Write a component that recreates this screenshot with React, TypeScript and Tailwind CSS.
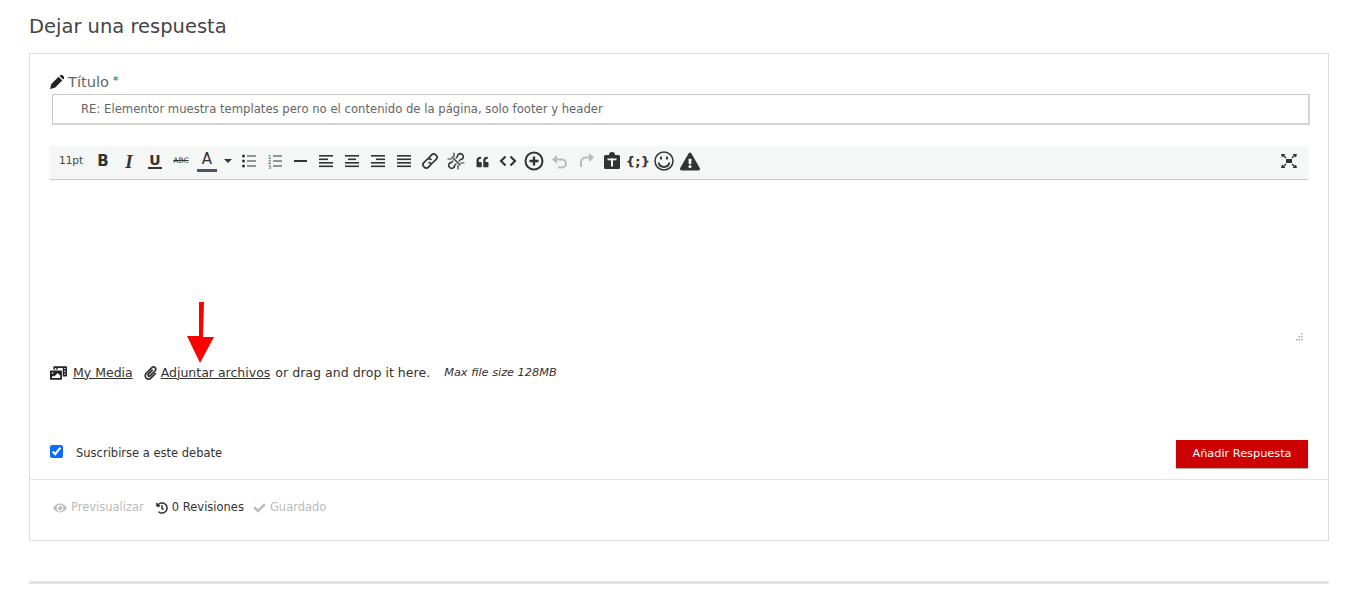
import { ReactNode } from 'react';
import {
  FaCheck,
  FaEye,
  FaHistory,
  FaPaperclip,
  FaPhotoVideo,
  FaQuoteLeft,
  FaExclamationTriangle,
} from 'react-icons/fa';

function Lines({ rows }: { rows: [number, number][] }) {
  return (
    <svg width="16" height="16" viewBox="0 0 16 16" fill="#333">
      {rows.map(([x, w], i) => (
        <rect key={i} x={x} y={2 + i * 3.5} width={w} height="1.6" />
      ))}
    </svg>
  );
}

function ToolButton({ children, className = 'w-[26px]' }: { children: ReactNode; className?: string }) {
  return <div className={`flex h-full shrink-0 items-center justify-center text-[#333] ${className}`}>{children}</div>;
}

export default function App() {
  return (
    <div className="relative h-[592px] w-[1351px] overflow-hidden bg-white pl-[29px] pr-[22px] font-['DejaVu_Sans',sans-serif] text-[12px] text-[#333]">
      <h2 className="h-[53px] pt-[13px] text-[19.5px] leading-[28px] text-[#444]">Dejar una respuesta</h2>

      <div className="h-[488px] border border-[#ddd]">
        <div className="px-[20px] pt-[18px]">
          <div className="flex h-[22px] items-center pb-[2px] text-[14.6px] text-[#666]">
            <svg width="14" height="14" viewBox="0 0 14 14" fill="#222">
              <path d="M0 14l1.300-5L8.600 1.800l3.600 3.600L5 12.700zM9.600 0.900 10.500 0a1.300 1.300 0 0 1 1.800 0l1.700 1.700a1.300 1.300 0 0 1 0 1.800l-.9.900z" />
            </svg>
            <span className="ml-[4px]">Título</span>
            <span className="ml-[4px] -mt-[3px] text-[10px] font-bold text-[#3a8f7d]">*</span>
          </div>
          <div className="ml-[2px] flex h-[31px] w-[1258px] items-center border border-[#c8c8c8] border-b-2 border-r-2 border-b-[#d4d4d4] border-r-[#d4d4d4] pl-[28px] pt-[2px] text-[11.65px] text-[#666]">
            RE: Elementor muestra templates pero no el contenido de la página, solo footer y header
          </div>
          <div className="mt-[21px] flex h-[33px] w-[1258px] items-center bg-[#f5f7f6] pb-[3px] pl-[9px] pr-[11px] shadow-[0_1px_1px_rgba(0,0,0,0.2)]">
            <span className="w-[31px] text-[10.5px] text-[#444]">11pt</span>
            <ToolButton><span className="text-[15px] font-bold leading-none">B</span></ToolButton>
            <ToolButton><span className="font-['Liberation_Serif',serif] text-[19px] font-bold italic leading-none">I</span></ToolButton>
            <ToolButton><span className="border-b-2 border-[#333] px-[1px] text-[14px] font-semibold leading-[13px]">U</span></ToolButton>
            <ToolButton><span className="text-[7.5px] leading-none line-through">ABC</span></ToolButton>
            <ToolButton>
              <span className="w-[20px] border-b-[3px] border-[#4a5560] pb-[2px] pt-[2px] text-center text-[15px] leading-none">A</span>
            </ToolButton>
            <ToolButton className="w-[16px]">
              <span className="h-0 w-0 border-x-[4px] border-t-[4px] border-x-transparent border-t-[#333]" />
            </ToolButton>
            <ToolButton>
              <svg width="16" height="16" viewBox="0 0 16 16" fill="#333">
                <circle cx="2.500" cy="3" r="1.500" /><circle cx="2.500" cy="8" r="1.500" /><circle cx="2.500" cy="13" r="1.500" />
                <rect x="6" y="2.500" width="9" height="1" /><rect x="6" y="7.500" width="9" height="1" /><rect x="6" y="12.500" width="9" height="1" />
              </svg>
            </ToolButton>
            <ToolButton>
              <svg width="16" height="16" viewBox="0 0 16 16" fill="#333">
                <rect x="6" y="2.500" width="9" height="1" /><rect x="6" y="7.500" width="9" height="1" /><rect x="6" y="12.500" width="9" height="1" />
                <text x="1" y="5.500" fontSize="5">1</text><text x="1" y="10.500" fontSize="5">2</text><text x="1" y="15.500" fontSize="5">3</text>
              </svg>
            </ToolButton>
            <ToolButton className="w-[25px]"><span className="h-[2px] w-[13px] bg-[#333]" /></ToolButton>
            <ToolButton><Lines rows={[[1, 14], [1, 9], [1, 14], [1, 14]]} /></ToolButton>
            <ToolButton><Lines rows={[[1, 14], [4, 8], [1, 14], [1, 14]]} /></ToolButton>
            <ToolButton><Lines rows={[[1, 14], [6, 9], [1, 14], [1, 14]]} /></ToolButton>
            <ToolButton><Lines rows={[[1, 14], [1, 14], [1, 14], [1, 14]]} /></ToolButton>
            <ToolButton>
              <svg width="18" height="18" viewBox="0 0 18 18" fill="none" stroke="#333" strokeWidth="1.700" strokeLinecap="round">
                <path d="M7.500 6 10.600 2.800a2.900 2.900 0 0 1 4.100 0l.5.500a2.900 2.900 0 0 1 0 4.100L12 10.500a2.900 2.900 0 0 1-4 0" />
                <path d="M10.500 12 7.400 15.200a2.900 2.900 0 0 1-4.100 0l-.5-.5a2.900 2.900 0 0 1 0-4.100L6 7.500a2.900 2.900 0 0 1 4 0" />
              </svg>
            </ToolButton>
            <ToolButton>
              <svg width="18" height="18" viewBox="0 0 18 18" fill="none" stroke="#333" strokeWidth="1.600" strokeLinecap="round">
                <path d="M10.500 3.300 11.300 2.500a2.800 2.800 0 0 1 4 0l.2.200a2.800 2.800 0 0 1 0 4l-.8.800" />
                <path d="M7.500 14.700 6.700 15.500a2.800 2.800 0 0 1-4 0l-.2-.2a2.800 2.800 0 0 1 0-4l.8-.8" />
                <path d="M7 1v3.500M1 7h3.500M11 17v-3.500M17 11h-3.500M5 5l8 8M6 9l-2 2M12 9l2-2M9 6l2-2M9 12l-2 2" strokeWidth="1.200" />
              </svg>
            </ToolButton>
            <ToolButton><FaQuoteLeft className="mt-[2px] h-[12px] w-[15px]" /></ToolButton>
            <ToolButton>
              <svg width="18" height="12" viewBox="0 0 18 12" fill="none" stroke="#333" strokeWidth="2.200">
                <path d="M6.500 1.500 2 6l4.500 4.500M11.500 1.500 16 6l-4.500 4.500" />
              </svg>
            </ToolButton>
            <ToolButton>
              <svg width="20" height="20" viewBox="0 0 20 20" fill="none" stroke="#333" strokeWidth="2">
                <circle cx="10" cy="10" r="8.500" /><path d="M5.500 10h9M10 5.500v9" strokeWidth="2.400" />
              </svg>
            </ToolButton>
            <ToolButton>
              <svg width="18" height="16" viewBox="0 0 18 16" fill="none" stroke="#bbb" strokeWidth="2">
                <path d="M5 6.500h6a4 4 0 0 1 0 8H7" /><path d="M6 2v9L1 6.500z" fill="#bbb" stroke="none" />
              </svg>
            </ToolButton>
            <ToolButton>
              <svg width="18" height="16" viewBox="0 0 18 16" fill="none" stroke="#bbb" strokeWidth="2">
                <path d="M13 4.500H8.500A4.500 4.500 0 0 0 4 9v5" /><path d="M12 0v9l5-4.500z" fill="#bbb" stroke="none" />
              </svg>
            </ToolButton>
            <ToolButton>
              <svg width="18" height="18" viewBox="0 0 18 18" fill="#333">
                <path d="M2.500 3H6a3 3 0 0 1 6 0h3.500A1.500 1.500 0 0 1 17 4.500v11a1.500 1.500 0 0 1-1.500 1.500h-13A1.500 1.500 0 0 1 1 15.500v-11A1.500 1.500 0 0 1 2.500 3z" />
                <rect x="4.500" y="6.500" width="9" height="1.800" fill="#f5f7f6" /><rect x="8" y="6.500" width="2" height="8" fill="#f5f7f6" />
              </svg>
            </ToolButton>
            <ToolButton><span className="text-[13px] font-bold leading-none tracking-[0.3px]">{'{;}'}</span></ToolButton>
            <ToolButton>
              <svg width="20" height="20" viewBox="0 0 20 20" fill="none" stroke="#333" strokeWidth="1.500">
                <circle cx="10" cy="10" r="9" />
                <path d="M4.500 11.500c.8 3 3 4.500 5.500 4.500s4.700-1.500 5.500-4.500" strokeWidth="1.800" />
                <ellipse cx="7" cy="7" rx="1.100" ry="1.700" fill="#333" stroke="none" />
                <ellipse cx="13" cy="7" rx="1.100" ry="1.700" fill="#333" stroke="none" />
              </svg>
            </ToolButton>
            <ToolButton><FaExclamationTriangle className="h-[19px] w-[20px]" /></ToolButton>
            <div className="flex-1" />
            <svg width="16" height="14" viewBox="0 0 16 14" fill="#333">
              <rect x="5" y="5" width="6" height="4" />
              <path d="M0 0h4.500L3.300 1.300 5.500 3.600 4.500 4.600 2.300 2.300 1 3.500zM16 0h-4.500l1.200 1.300-2.200 2.300 1 1 2.200-2.300L15 3.500zM0 14h4.500l-1.200-1.300 2.200-2.300-1-1-2.200 2.300L1 10.500zM16 14h-4.500l1.200-1.300-2.200-2.300 1-1 2.200 2.300 1.300-1.200z" />
            </svg>
          </div>
          <div className="flex h-[165px] w-[1258px] items-end justify-end pb-[2px] pr-[5px]">
            <svg width="9" height="9" viewBox="0 0 9 9" fill="#aaa">
              <rect x="7" y="0" width="1.500" height="1.500" />
              <rect x="4.500" y="3" width="1.500" height="1.500" /><rect x="7" y="3" width="1.500" height="1.500" />
              <rect x="2" y="6" width="1.500" height="1.500" /><rect x="4.500" y="6" width="1.500" height="1.500" /><rect x="7" y="6" width="1.500" height="1.500" />
            </svg>
          </div>
          <div className="mt-[19px] flex h-[20px] items-center text-[12.5px] text-[#333]">
            <FaPhotoVideo className="h-[14px] w-[17px] text-[#222]" />
            <span className="ml-[6px] underline">My Media</span>
            <FaPaperclip className="ml-[11px] h-[14px] w-[13px] text-[#333]" />
            <span className="ml-[4px] underline">Adjuntar archivos</span>
            <span className="ml-[5px] text-[12.6px]">or drag and drop it here.</span>
            <span className="ml-[14px] text-[11.3px] italic">Max file size 128MB</span>
          </div>
          <div className="mt-[57px] flex h-[28px] w-[1258px] items-center justify-between">
            <div className="flex items-center pb-[1px]">
              <input type="checkbox" defaultChecked readOnly className="m-0 -mt-[4px] h-[13px] w-[13px] accent-[#0a6cff]" />
              <span className="ml-[13px] text-[11.5px]">Suscribirse a este debate</span>
            </div>
            <button className="h-[28px] w-[132px] bg-[#cc0000] text-center text-[11.3px] text-white shadow-[0_1px_1px_rgba(0,0,0,0.3)]">
              Añadir Respuesta
            </button>
          </div>
        </div>
        <div className="mt-[11px] flex h-[61px] items-center border-t border-[#e5e5e5] pb-[5px] pl-[23px] text-[11.5px]">
          <FaEye className="h-[12px] w-[14px] text-[#bbb]" />
          <span className="ml-[4px] text-[#bbb]">Previsualizar</span>
          <FaHistory className="ml-[12px] h-[12px] w-[12px] text-[#333]" />
          <span className="ml-[4px]">0 Revisiones</span>
          <FaCheck className="ml-[9px] h-[12px] w-[13px] text-[#bbb]" />
          <span className="ml-[4px] text-[#bbb]">Guardado</span>
        </div>
      </div>

      <div className="mt-[40px] h-[3px] bg-[#e5e5e5]" />

      {/* red arrow drawn over the screenshot */}
      <svg className="absolute left-[180px] top-[296px]" width="40" height="72" viewBox="0 0 40 72" fill="#ff0000">
        <path d="M19 6h5l-1 35h11L20 67 7 40h12z" />
      </svg>
    </div>
  );
}
